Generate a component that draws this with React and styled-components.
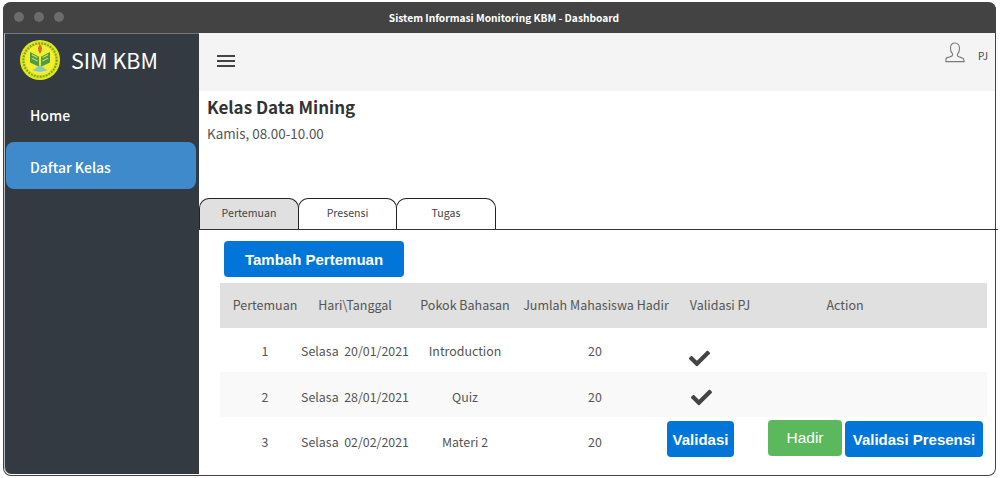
import styled, { createGlobalStyle } from "styled-components";
import { FaCheck } from "react-icons/fa";

const rows = [
  { no: 1, day: "Selasa", date: "20/01/2021", topic: "Introduction", count: 20, checked: true, height: 44, textPad: 2, checkTop: 16, checkLeft: 29 },
  { no: 2, day: "Selasa", date: "28/01/2021", topic: "Quiz", count: 20, checked: true, height: 45, textPad: 4, checkTop: 6, checkLeft: 31 },
  { no: 3, day: "Selasa", date: "02/02/2021", topic: "Materi 2", count: 20, checked: false, height: 45, textPad: 4 },
];

const Logo = () => (
  <svg width="40" height="40" viewBox="0 0 42 42">
    <circle cx="21" cy="21" r="21" fill="#dfe81c" />
    <circle cx="21" cy="21" r="17.500" fill="none" stroke="#7d9f2c" strokeWidth="2.200" strokeDasharray="2 1.200" />
    <circle cx="21" cy="21" r="15.500" fill="#f2ee30" />
    <path d="M21 4.500c2.400 3 3 5.500 0 10c-3-4.500-2.400-7 0-10z" fill="#e0662a" />
    <path d="M20 28V17.500L10.500 12.500v11z" fill="#4f9a45" />
    <path d="M22 28V17.500L31.500 12.500v11z" fill="#4f9a45" />
    <path d="M12.500 15.500l6 3M12.500 19l6 3M29.500 15.500l-6 3M29.500 19l-6 3" stroke="#dbe65a" strokeWidth="1.100" />
    <path d="M13 32l8-5.500l8 5.500l-8 1.500z" fill="#8cc7bd" />
  </svg>
);

const UserIcon = () => (
  <svg width="20" height="21" viewBox="0 0 22 23" fill="none" stroke="#7a7a7a" strokeWidth="1.200">
    <path d="M1 21.500h20v-1.200c0-1.500-1-2.300-2.500-2.900l-3.800-1.400c-.7-.3-1-.8-1-1.500v-1c1.300-1.400 2.300-3.500 2.300-6.300C16 3.400 14 1 11 1S6 3.400 6 6.700c0 2.800 1 4.900 2.300 6.300v1c0 .7-.3 1.200-1 1.500l-3.800 1.400C2 17 1 17.800 1 19.300z" />
  </svg>
);

export default function App() {
  return (
    <>
      <GlobalStyle />
      <Frame>
        <TitleBar>
          <Dots>
            <Dot />
            <Dot />
            <Dot />
          </Dots>
          <WindowTitle>Sistem Informasi Monitoring KBM - Dashboard</WindowTitle>
        </TitleBar>
        <Body>
          <Sidebar>
            <Brand>
              <Logo />
              <BrandName>SIM KBM</BrandName>
            </Brand>
            <NavItem>Home</NavItem>
            <NavItem $active>Daftar Kelas</NavItem>
          </Sidebar>
          <Main>
            <TopBar>
              <Burger>
                <span />
                <span />
                <span />
              </Burger>
              <UserBox>
                <UserIcon />
                <UserName>PJ</UserName>
              </UserBox>
            </TopBar>
            <ClassInfo>
              <ClassTitle>Kelas Data Mining</ClassTitle>
              <ClassTime>Kamis, 08.00-10.00</ClassTime>
            </ClassInfo>
            <Tabs>
              <Tab $active $width={100}>Pertemuan</Tab>
              <Tab $width={99}>Presensi</Tab>
              <Tab $width={100}>Tugas</Tab>
            </Tabs>
            <Content>
              <AddButton>Tambah Pertemuan</AddButton>
              <Table>
                <HeadRow>
                  <Cell>Pertemuan</Cell>
                  <Cell>Hari\Tanggal</Cell>
                  <Cell>Pokok Bahasan</Cell>
                  <Cell>Jumlah Mahasiswa Hadir</Cell>
                  <Cell>Validasi PJ</Cell>
                  <Cell>Action</Cell>
                </HeadRow>
                {rows.map((r) => (
                  <Row key={r.no} $striped={r.no === 2} $height={r.height}>
                    <Cell $pad={r.textPad}>{r.no}</Cell>
                    <Cell $pad={r.textPad}>
                      {r.day}&nbsp;&nbsp;{r.date}
                    </Cell>
                    <Cell $pad={r.textPad}>{r.topic}</Cell>
                    <Cell $pad={r.textPad}>{r.count}</Cell>
                    {r.checked ? (
                      <CheckCell $top={r.checkTop} $left={r.checkLeft}>
                        <FaCheck />
                      </CheckCell>
                    ) : (
                      <ValidateCell>
                        <BlueButton>Validasi</BlueButton>
                      </ValidateCell>
                    )}
                    {!r.checked && (
                      <Actions>
                        <GreenButton>Hadir</GreenButton>
                        <BlueButton $wide>Validasi Presensi</BlueButton>
                      </Actions>
                    )}
                  </Row>
                ))}
              </Table>
            </Content>
          </Main>
        </Body>
      </Frame>
    </>
  );
}

const sans = `"Noto Sans CJK SC", "Noto Sans", sans-serif`;

const GlobalStyle = createGlobalStyle`
  html, body {
    margin: 0;
    padding: 0;
    background: #fff;
    overflow: hidden;
  }
  body {
    font-family: ${sans};
    color: #555;
  }
`;

const Frame = styled.div`
  box-sizing: border-box;
  width: 993px;
  height: 474px;
  margin: 2px 0 0 3px;
  display: flex;
  flex-direction: column;
  border-radius: 8px;
  border: 1px solid #444;
  border-top: 0;
  background: #fff;
`;

const TitleBar = styled.div`
  position: relative;
  flex: 0 0 31px;
  display: flex;
  align-items: center;
  justify-content: center;
  background: #434343;
  border-radius: 8px 8px 0 0;
  margin: 0 -1px;
`;

const Dots = styled.div`
  position: absolute;
  left: 11px;
  top: 10px;
  display: flex;
  gap: 10px;
`;

const Dot = styled.span`
  width: 10px;
  height: 10px;
  border-radius: 50%;
  background: #6b6b6b;
`;

const WindowTitle = styled.div`
  margin-left: 9px;
  font-size: 10.200px;
  font-weight: 700;
  color: #fff;
`;

const Body = styled.div`
  flex: 1;
  display: flex;
  min-height: 0;
`;

const Sidebar = styled.nav`
  box-sizing: border-box;
  flex: 0 0 195px;
  margin-bottom: 1px;
  padding: 2px 3px 0 1px;
  background: #343a42;
  border-top: 1px solid #777;
  border-left: 1px solid #bbb;
  border-radius: 0 0 0 7px;
`;

const Brand = styled.div`
  display: flex;
  align-items: center;
  gap: 11px;
  height: 47px;
  padding-left: 14px;
  margin-bottom: 8px;
`;

const BrandName = styled.div`
  font-size: 21.500px;
  color: #fff;
`;

const NavItem = styled.div`
  box-sizing: border-box;
  display: flex;
  align-items: center;
  height: 47px;
  margin-bottom: 4px;
  padding: ${(p) => (p.$active ? "2px" : "0")} 0 0 24px;
  border-radius: 8px;
  font-size: 14px;
  font-weight: 500;
  color: #fff;
  background: ${(p) => (p.$active ? "#3f8acb" : "transparent")};
`;

const Main = styled.main`
  flex: 1;
  min-width: 0;
  display: flex;
  flex-direction: column;
`;

const TopBar = styled.header`
  flex: 0 0 58px;
  display: flex;
  align-items: flex-start;
  justify-content: space-between;
  background: #f4f4f4;
`;

const Burger = styled.div`
  display: flex;
  flex-direction: column;
  gap: 3px;
  width: 18px;
  margin: 22px 0 0 18px;

  span {
    height: 2px;
    background: #444;
  }
`;

const UserBox = styled.div`
  display: flex;
  align-items: center;
  gap: 13px;
  margin: 9px 7px 0 0;
`;

const UserName = styled.span`
  padding-top: 6px;
  font-size: 10px;
  color: #444;
`;

const ClassInfo = styled.div`
  flex: 0 0 107px;
  padding: 4px 0 0 8px;
  box-sizing: border-box;
`;

const ClassTitle = styled.div`
  font-size: 17px;
  font-weight: 700;
  line-height: 24px;
  color: #333;
`;

const ClassTime = styled.div`
  margin-top: 4px;
  font-size: 13.400px;
  line-height: 20px;
  color: #555;
`;

const Tabs = styled.div`
  display: flex;
  margin-right: -3px;
  height: 32px;
  box-sizing: border-box;
  border-bottom: 1px solid #333;
`;

const Tab = styled.div`
  box-sizing: border-box;
  width: ${(p) => p.$width}px;
  margin-right: -1px;
  padding-bottom: 4px;
  display: flex;
  align-items: center;
  justify-content: center;
  border: 1px solid #222;
  border-bottom: 0;
  border-radius: 10px 10px 0 0;
  font-size: 10.600px;
  color: #444;
  background: ${(p) => (p.$active ? "#e0e0e0" : "#fff")};
`;

const Content = styled.div`
  flex: 1;
  padding: 11px 8px 0 21px;
`;

const AddButton = styled.button`
  display: block;
  box-sizing: border-box;
  width: 180px;
  height: 36px;
  margin: 0 0 6px 4px;
  padding: 0;
  border: 0;
  border-radius: 4px;
  background: #0275d8;
  color: #fff;
  font-family: "Liberation Sans", Arial, sans-serif;
  font-size: 15px;
  font-weight: 700;
`;

const Table = styled.div`
  display: flex;
  flex-direction: column;
`;

const HeadRow = styled.div`
  display: grid;
  grid-template-columns: 90px 90px 130px 132px 116px 134px;
  align-items: center;
  height: 45px;
  padding-bottom: 2px;
  box-sizing: border-box;
  background: #e0e0e0;
  font-size: 12.500px;
`;

const Row = styled.div`
  display: grid;
  grid-template-columns: 90px 90px 130px 130px 108px 1fr;
  align-items: center;
  height: ${(p) => p.$height}px;
  font-size: 12.400px;
  background: ${(p) => (p.$striped ? "#f9f9f9" : "transparent")};
`;

const Cell = styled.div`
  display: flex;
  justify-content: center;
  padding-top: ${(p) => p.$pad || 0}px;
  white-space: nowrap;
`;

const CheckCell = styled.div`
  display: flex;
  padding: ${(p) => p.$top}px 0 0 ${(p) => p.$left}px;
  font-size: 21px;
  color: #444;
`;

const ValidateCell = styled.div`
  padding: 0 0 1px 7px;
`;

const Actions = styled.div`
  display: flex;
  align-items: center;
  gap: 3px;
  padding-bottom: 1px;
`;

const BlueButton = styled.button`
  box-sizing: border-box;
  width: ${(p) => (p.$wide ? 138 : 67)}px;
  height: 36px;
  padding: 0;
  border: 0;
  border-radius: 4px;
  background: #0275d8;
  color: #fff;
  font-family: "Liberation Sans", Arial, sans-serif;
  font-size: 15px;
  font-weight: 700;
`;

const GreenButton = styled.button`
  box-sizing: border-box;
  width: 74px;
  height: 36px;
  margin-top: -2px;
  padding: 0;
  border: 0;
  border-radius: 4px;
  background: #5cb85c;
  color: #fff;
  font-family: "Liberation Sans", Arial, sans-serif;
  font-size: 15.500px;
`;
